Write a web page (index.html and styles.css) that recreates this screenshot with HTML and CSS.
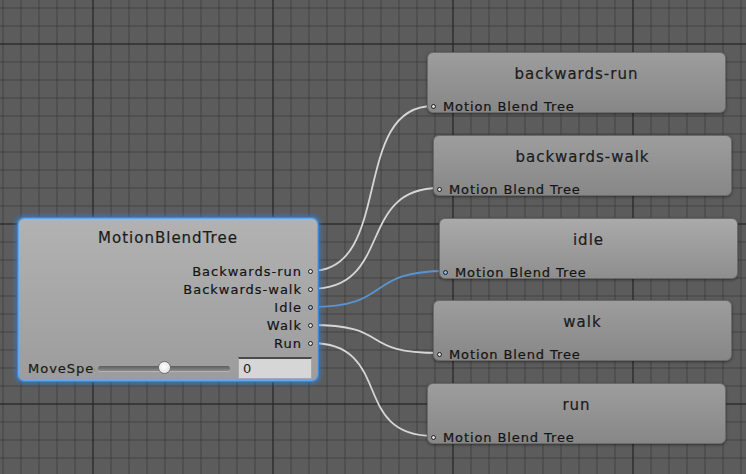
FILE: index.html
```html
<!DOCTYPE html>
<html>
<head>
<meta charset="utf-8">
<link rel="stylesheet" href="styles.css">
</head>
<body>
<div class="canvas">
  <svg class="wires" width="746" height="474" viewBox="0 0 746 474">
    <path class="wire" d="M311 271 C 394 271, 350 106, 433 106"/>
    <path class="wire" d="M311 289 C 394 289, 356 188, 439 188"/>
    <path class="wire blue" d="M311 307 C 394 307, 363 271, 446 271"/>
    <path class="wire" d="M311 325 C 394 325, 356 353, 439 353"/>
    <path class="wire" d="M311 343 C 394 343, 350 436, 433 436"/>
  </svg>

  <div class="node blend" style="left:18px;top:218px">
    <div class="title">MotionBlendTree</div>
    <div class="outputs">
      <div class="out-row"><span>Backwards-run</span><i class="port"></i></div>
      <div class="out-row"><span>Backwards-walk</span><i class="port"></i></div>
      <div class="out-row"><span>Idle</span><i class="port active"></i></div>
      <div class="out-row"><span>Walk</span><i class="port"></i></div>
      <div class="out-row"><span>Run</span><i class="port"></i></div>
    </div>
    <div class="param-row">
      <div class="param-label">MoveSpeed</div>
      <div class="slider"><div class="track"></div><div class="thumb"></div></div>
      <div class="num-field">0</div>
    </div>
  </div>

  <div class="node clip" style="left:427px;top:52px">
    <div class="title">backwards-run</div>
    <div class="in-row"><i class="port"></i><span>Motion Blend Tree</span></div>
  </div>
  <div class="node clip" style="left:433px;top:135px">
    <div class="title">backwards-walk</div>
    <div class="in-row"><i class="port"></i><span>Motion Blend Tree</span></div>
  </div>
  <div class="node clip light" style="left:439px;top:218px">
    <div class="title">idle</div>
    <div class="in-row"><i class="port active"></i><span>Motion Blend Tree</span></div>
  </div>
  <div class="node clip" style="left:433px;top:300px">
    <div class="title">walk</div>
    <div class="in-row"><i class="port"></i><span>Motion Blend Tree</span></div>
  </div>
  <div class="node clip" style="left:427px;top:383px">
    <div class="title">run</div>
    <div class="in-row"><i class="port"></i><span>Motion Blend Tree</span></div>
  </div>
</div>
</body>
</html>
```
FILE: styles.css
```css
html, body {
  margin: 0;
  padding: 0;
  width: 746px;
  height: 474px;
  overflow: hidden;
}
body {
  font-family: "DejaVu Sans", Verdana, sans-serif;
}
.canvas {
  position: relative;
  width: 746px;
  height: 474px;
  background-color: #5c5c5c;
  background-image:
    linear-gradient(to right, rgba(40,40,40,0.55) 2px, transparent 2px),
    linear-gradient(to bottom, rgba(40,40,40,0.55) 2px, transparent 2px),
    linear-gradient(to right, rgba(50,50,50,0.28) 2px, transparent 2px),
    linear-gradient(to bottom, rgba(50,50,50,0.28) 2px, transparent 2px);
  background-size: 180px 100%, 100% 180px, 18px 100%, 100% 18px;
  background-position: 92px 0, 0 43px, 2px 0, 0 7px;
}
.wires {
  position: absolute;
  left: 0;
  top: 0;
}
.wire {
  fill: none;
  stroke: #d6d6d6;
  stroke-width: 1.8;
}
.wire.blue {
  stroke: #5a93d2;
}
.node {
  position: absolute;
  box-sizing: border-box;
  border-radius: 6px;
  display: flex;
  flex-direction: column;
  color: #141414;
  -webkit-text-stroke: 0.2px currentColor;
}
.clip {
  width: 299px;
  height: 61px;
  background: linear-gradient(to bottom, #9d9d9d, #878787);
  border: 1px solid #6a6a6a;
  box-shadow: 0 1px 3px rgba(0,0,0,0.45);
  padding-top: 11px;
}
.clip.light {
  background: linear-gradient(to bottom, #aaaaaa, #8e8e8e);
}
.blend {
  width: 300px;
  height: 163px;
  background: linear-gradient(to bottom, #b2b2b2, #9c9c9c);
  border: 1px solid #5fa6ee;
  box-shadow: 0 0 0 1px #3f86d6, 0 0 4px 3px rgba(50,130,220,0.55);
  padding-top: 9px;
}
.title {
  font-size: 15px;
  letter-spacing: 1px;
  line-height: 21px;
  text-align: center;
  color: #1c1c1c;
}
.outputs {
  margin-top: 13px;
  display: flex;
  flex-direction: column;
  align-items: flex-end;
  padding-right: 4px;
}
.out-row {
  display: flex;
  align-items: center;
  gap: 6px;
  height: 18px;
  font-size: 13px;
  letter-spacing: 1px;
}
.port {
  display: block;
  width: 3px;
  height: 3px;
  border-radius: 50%;
  border: 1.5px solid #1e1e1e;
  background: #dcdcdc;
  flex: none;
}
.port.active {
  background: #7fb6f0;
}
.in-row {
  margin-top: auto;
  display: flex;
  align-items: center;
  gap: 7px;
  height: 12px;
  padding-left: 3px;
  font-size: 13px;
  letter-spacing: 0.9px;
}
.param-row {
  margin-top: 4px;
  display: flex;
  align-items: center;
  height: 24px;
  padding-left: 9px;
}
.param-label {
  width: 67px;
  overflow: hidden;
  white-space: nowrap;
  font-size: 13px;
  letter-spacing: 1px;
  color: #1a1a1a;
}
.slider {
  position: relative;
  margin-left: 3px;
  width: 132px;
  height: 24px;
  display: flex;
  align-items: center;
}
.track {
  width: 100%;
  height: 5px;
  border-radius: 3px;
  background: linear-gradient(to bottom, #5d5d5d, #8a8a8a);
  box-shadow: 0 1px 0 rgba(255,255,255,0.25);
}
.thumb {
  position: absolute;
  left: 60px;
  top: 5px;
  width: 13px;
  height: 13px;
  box-sizing: border-box;
  border-radius: 50%;
  border: 1px solid #707070;
  background: radial-gradient(circle at 45% 40%, #ffffff, #dadada);
}
.num-field {
  margin-left: 8px;
  width: 74px;
  height: 22px;
  box-sizing: border-box;
  border: 1px solid #a8a8a8;
  border-top: 2px solid #4a4a4a;
  background: #d6d6d6;
  font-size: 13px;
  line-height: 19px;
  padding-left: 4px;
  color: #1e1e1e;
  -webkit-text-stroke: 0;
}
```
